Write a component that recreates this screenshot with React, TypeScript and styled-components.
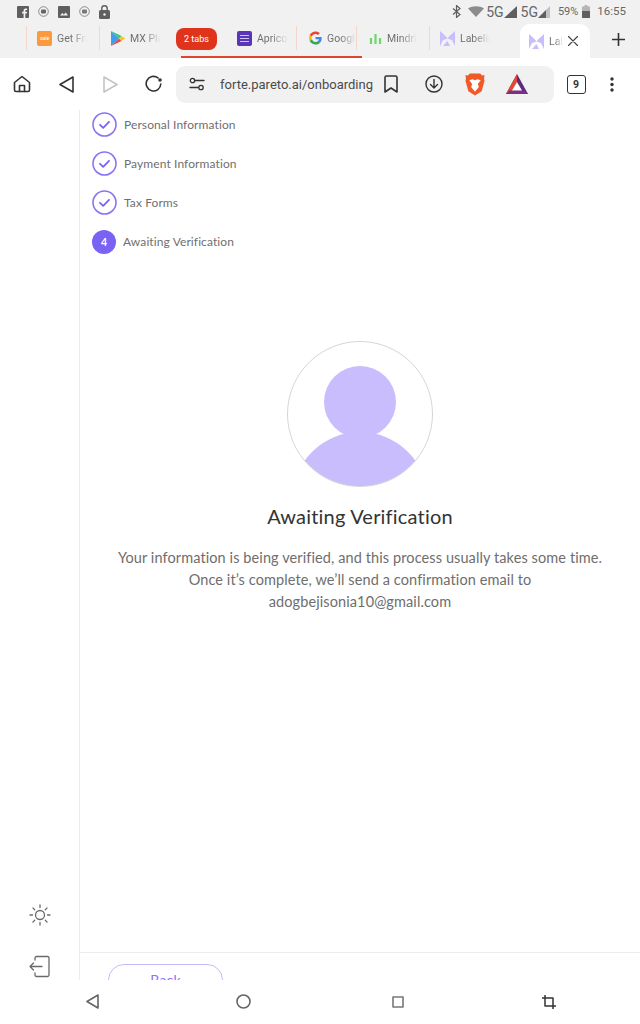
import React from "react";
import styled, { createGlobalStyle } from "styled-components";

const Global = createGlobalStyle`
  html, body { margin: 0; padding: 0; background: #fff; }
  * { box-sizing: border-box; }
`;

const Screen = styled.div`
  width: 640px; height: 1024px; overflow: hidden;
  display: flex; flex-direction: column;
  font-family: Roboto, "Liberation Sans", sans-serif;
  background: #fff;
`;
const StatusBar = styled.div`
  height: 24px; flex: none; background: #f1f1f1;
  display: flex; align-items: center; justify-content: space-between;
  padding: 0 14px 1px 17px; color: #5f5f5f;
`;
const StatusGroup = styled.div`
  display: flex; align-items: center; gap: ${p => p.$gap ?? 4}px;
`;
const StatusText = styled.span`
  font-size: ${p => p.$size ?? 11}px; color: #666; line-height: 1;
`;
const TabStrip = styled.div`
  height: 34px; flex: none; background: #f1f1f1;
  display: flex; align-items: flex-start; padding-left: 26px; position: relative;
`;
const Tab = styled.div`
  width: ${p => p.$w}px; flex: none; height: 24px; margin-top: 2px;
  display: flex; align-items: center; gap: 5px; padding-left: ${p => p.$pad ?? 10}px;
  border-left: 1px solid ${p => (p.$sep ? "#f6d5cd" : "transparent")};
  overflow: hidden;
`;
const TabLabel = styled.span`
  font-size: 10.5px; color: #707070; white-space: nowrap; overflow: hidden; width: ${p => p.$w}px;
  -webkit-mask-image: linear-gradient(90deg, #000 45%, transparent);
  mask-image: linear-gradient(90deg, #000 45%, transparent);
`;
const Group = styled.div`
  width: 60px; flex: none; height: 34px; margin-left: 5px; padding-left: 0;
  border-bottom: 0;
`;
const GroupPill = styled.div`
  width: 41px; height: 22px; margin-top: 4px; background: #e0331b; border-radius: 8px;
  color: #fff; font-size: 9px; display: flex; align-items: center; justify-content: center;
`;
const GroupLine = styled.div`
  position: absolute; left: 181px; top: 32px; width: 181px; height: 2px; background: #e0442f;
`;
const ActiveTab = styled.div`
  position: absolute; left: 520px; top: 0; width: 70px; height: 34px; background: #fff;
  border-radius: 10px 10px 0 0;
  display: flex; align-items: center; padding: 0 9px; gap: 5px;
`;
const PlusBtn = styled.div`
  position: absolute; left: 610px; top: 7px; width: 16px; height: 16px;
  color: #333; display: flex; align-items: center; justify-content: center;
`;
const Toolbar = styled.div`
  height: 52px; flex: none; background: #fff; display: flex; align-items: center;
  padding-left: 12px; position: relative;
`;
const ToolBtn = styled.div`
  width: ${p => p.$w ?? 20}px; height: 20px; flex: none; margin-right: ${p => p.$mr ?? 0}px;
  display: flex; align-items: center; justify-content: center;
`;
const UrlBar = styled.div`
  width: 378px; height: 37px; flex: none; background: #f1f1f1; border-radius: 9px;
  display: flex; align-items: center; margin: 0 12px 0 0; padding-left: 13px;
`;
const UrlText = styled.span`
  font-size: 13px; color: #4a4a4a; margin-left: 15px; width: 162px; white-space: nowrap;
`;
const TabCount = styled.div`
  width: 19px; height: 19px; border: 1.4px solid #333; border-radius: 3px;
  font-size: 10.5px; font-weight: 700; color: #333;
  display: flex; align-items: center; justify-content: center;
`;
const Body = styled.div`
  flex: 1; min-height: 0; display: flex; background: #fff;
`;
const Sidebar = styled.aside`
  width: 80px; flex: none; border-right: 1px solid #ececec;
  display: flex; flex-direction: column; align-items: center; justify-content: flex-end;
  padding-bottom: 2px; gap: 29px;
`;
const Main = styled.main`
  flex: 1; min-width: 0; display: flex; flex-direction: column;
  font-family: Lato, "Liberation Sans", sans-serif;
`;
const Content = styled.div`
  flex: 1; min-height: 0;
`;
const Steps = styled.ol`
  list-style: none; margin: 0; padding: 2px 0 0 12px;
  display: flex; flex-direction: column; gap: 14px;
`;
const Step = styled.li`
  display: flex; align-items: center; gap: 7px; height: 25px;
  font-size: 12px; color: #6f6f6f; letter-spacing: 0.1px;
`;
const StepNum = styled.span`
  width: 24px; height: 24px; border-radius: 50%; background: #7a62f5; color: #fff;
  font-size: 10.5px; font-weight: 700; display: flex; align-items: center; justify-content: center;
`;
const Center = styled.section`
  display: flex; flex-direction: column; align-items: center; margin-top: 87px;
`;
const Title = styled.h1`
  margin: 15px 0 0; font-size: 20px; line-height: 28px; font-weight: 400; color: #333; letter-spacing: 0.2px;
`;
const Para = styled.p`
  margin: 17px 0 0; font-size: 14.5px; line-height: 22px; text-align: center; color: #6e6e6e; letter-spacing: 0.1px;
`;
const Footer = styled.div`
  height: 28px; flex: none; border-top: 1px solid #ececec; padding: 11px 0 0 28px; overflow: hidden;
`;
const BackBtn = styled.div`
  width: 115px; height: 40px; border: 1px solid #c5bbfb; border-radius: 16px;
  color: #8b75f7; font-size: 14px; text-align: center; padding-top: 6px; letter-spacing: 0.2px;
`;
const NavBar = styled.div`
  height: 44px; flex: none; background: #fff; position: relative;
  display: grid; grid-template-columns: 92px 152px 153px 152px; padding-bottom: 1px;
`;
const NavItem = styled.div`
  display: flex; align-items: center; justify-content: flex-end; transform: translateX(7px);
`;

const Check = () => (
  <svg width="25" height="25" viewBox="0 0 25 25" fill="none">
    <circle cx="12.5" cy="12.5" r="11.5" stroke="#8a73f6" strokeWidth="1.6" />
    <path d="M8 12.8l3.2 3 5.8-6" stroke="#7a62f5" strokeWidth="1.8" strokeLinecap="round" strokeLinejoin="round" />
  </svg>
);
const LabelLogo = ({ s = 15 }: { s?: number }) => (
  <svg width={s} height={s} viewBox="0 0 15 15" fill="#c9bdfd">
    <path d="M0 0l5.5 5L7.5 7.5 3 9 0 15zM15 0L9.5 5 7.5 7.5 12 9 15 15zM3 15l4.5-5L10 15z" />
  </svg>
);
const Favicon = styled.span`
  width: 15px; height: 15px; flex: none; border-radius: ${p => p.$r ?? 2}px; background: ${p => p.$bg};
  color: #fff; font-size: 5px; display: flex; align-items: center; justify-content: center;
`;

const StatusIcons = () => (
  <StatusGroup $gap={9}>
    <svg width="12" height="12" viewBox="0 0 12 12"><rect width="12" height="12" rx="1" fill="#5f5f5f" /><path d="M8.3 12V7.5h1.5l.2-1.7H8.3V4.9c0-.5.2-.8.8-.8h1V2.6H8.7C7.400 2.600 6.600 3.400 6.600 4.700v1.100H5.100v1.700h1.500V12z" fill="#f1f1f1" /></svg>
    <svg width="11" height="11" viewBox="0 0 11 11"><circle cx="5.500" cy="5.500" r="4.800" fill="none" stroke="#8a8a8a" strokeWidth="1" /><rect x="3" y="3.500" width="5" height="4" rx="1" fill="#666" /></svg>
    <svg width="12" height="12" viewBox="0 0 12 12"><rect width="12" height="12" rx="1" fill="#5f5f5f" /><path d="M2 9.500l2.300-2.500 1.500 1.500L7.800 6.500 10 9.500z" fill="#f1f1f1" /></svg>
    <svg width="11" height="11" viewBox="0 0 11 11"><circle cx="5.500" cy="5.500" r="4.800" fill="none" stroke="#8a8a8a" strokeWidth="1" /><rect x="3" y="3.500" width="5" height="4" rx="1" fill="#777" /></svg>
    <svg width="12" height="14" viewBox="0 0 12 14"><rect y="5" width="11" height="9" rx="1.500" fill="#5f5f5f" /><path d="M2.800 5.500V3.500a2.700 2.700 0 015.400 0v2" fill="none" stroke="#5f5f5f" strokeWidth="1.400" /><circle cx="5.500" cy="9.500" r="1.200" fill="#f1f1f1" /></svg>
  </StatusGroup>
);

const StatusRight = () => (
  <StatusGroup $gap={0}>
    <svg width="10" height="13" viewBox="0 0 10 13" style={{ marginRight: 6 }}><path d="M1 3.500l7 6-3.500 3V.5l3.500 3-7 6" fill="none" stroke="#5f5f5f" strokeWidth="1.200" /></svg>
    <svg width="16" height="11" viewBox="0 0 16 11" style={{ marginRight: 2 }}><path d="M0 2.500C4 -.5 12 -.5 16 2.500L8 11z" fill="#8c8c8c" /></svg>
    <StatusText $size={14}>5G</StatusText>
    <svg width="13" height="12" viewBox="0 0 13 12" style={{ marginRight: 4 }}><path d="M13 0v12H0z" fill="#5f5f5f" /></svg>
    <StatusText $size={14}>5G</StatusText>
    <svg width="12" height="12" viewBox="0 0 12 12" style={{ marginRight: 8 }}><path d="M12 0v12H0z" fill="#c2c2c2" /><path d="M8 4v8H0z" fill="#5f5f5f" /></svg>
    <StatusText $size={11}>59%</StatusText>
    <svg width="8" height="13" viewBox="0 0 8 13" style={{ margin: "0 7px 0 4px" }}><path d="M2.500 0h3v1.500H8V13H0V1.500h2.500z" fill="#b5b5b5" /><path d="M0 6h8v7H0z" fill="#5f5f5f" /></svg>
    <StatusText $size={11.500}>16:55</StatusText>
  </StatusGroup>
);

const Icon = styled.svg`
  fill: none; stroke: ${p => p.$c ?? "#333"}; stroke-width: ${p => p.$sw ?? 1.600}; stroke-linejoin: round; stroke-linecap: round;
`;

export default function App() {
  return (
    <Screen>
      <Global />
      <StatusBar>
        <StatusIcons />
        <StatusRight />
      </StatusBar>
      <TabStrip>
        <Tab $w={73} $sep $pad={10}>
          <Favicon $bg="#fb9a3c">sale</Favicon>
          <TabLabel $w={30}>Get Free</TabLabel>
        </Tab>
        <Tab $w={72} $sep $pad={11}>
          <svg width="14" height="15" viewBox="0 0 14 15"><path d="M0 0l8 7.500L0 15z" fill="#3d9df0" /><path d="M0 0l10.500 5L8 7.500z" fill="#37c878" /><path d="M0 15l10.500-5L8 7.500z" fill="#ea4a3c" /><path d="M10.500 5L14 7.500 10.500 10 8 7.500z" fill="#fcc419" /></svg>
          <TabLabel $w={31}>MX Player</TabLabel>
        </Tab>
        <Group>
          <GroupPill>2 tabs</GroupPill>
        </Group>
        <Tab $w={60} $pad={0}>
          <Favicon $bg="#5a35b8"><svg width="9" height="7" viewBox="0 0 9 7"><path d="M0 .5h9M0 3.500h9M0 6.500h9" stroke="#cfc4f2" strokeWidth="1" /></svg></Favicon>
          <TabLabel $w={31}>Apricot</TabLabel>
        </Tab>
        <Tab $w={60} $sep $pad={12}>
          <svg width="14" height="14" viewBox="0 0 48 48"><path fill="#EA4335" d="M24 9.500c3.500 0 6.700 1.300 9.200 3.400l6.900-6.900C35.900 2.400 30.300 0 24 0 14.600 0 6.500 5.400 2.600 13.200l8 6.200C12.500 13.600 17.800 9.500 24 9.500z" /><path fill="#4285F4" d="M46.500 24.500c0-1.600-.1-3.100-.4-4.500H24v9h12.700c-.5 3-2.200 5.500-4.700 7.200l7.700 6c4.500-4.200 6.800-10.400 6.800-17.700z" /><path fill="#FBBC05" d="M10.500 28.600C10 27.200 9.800 25.600 9.800 24s.3-3.200.8-4.600l-8-6.200C1 16.400 0 20.100 0 24s1 7.600 2.600 10.800z" /><path fill="#34A853" d="M24 48c6.500 0 11.900-2.100 15.900-5.800l-7.700-6c-2.200 1.400-4.900 2.300-8.200 2.300-6.200 0-11.500-4.200-13.400-9.800l-8 6.200C6.500 42.600 14.600 48 24 48z" /></svg>
          <TabLabel $w={31}>Google</TabLabel>
        </Tab>
        <Tab $w={73} $sep $pad={12}>
          <svg width="13" height="13" viewBox="0 0 13 13" fill="none" stroke="#6fd66f" strokeWidth="2.200"><path d="M2 12V6M6.500 12V2M11 12V6" /></svg>
          <TabLabel $w={30}>Mindrift</TabLabel>
        </Tab>
        <Tab $w={70} $sep $pad={10}>
          <LabelLogo />
          <TabLabel $w={30}>Labeling</TabLabel>
        </Tab>
        <GroupLine />
        <ActiveTab>
          <LabelLogo />
          <TabLabel $w={14}>Label</TabLabel>
          <Icon width="10" height="10" viewBox="0 0 10 10" $sw={1.200} $c="#444"><path d="M.5.500l9 9M9.500.500l-9 9" /></Icon>
        </ActiveTab>
        <PlusBtn>
          <Icon width="13" height="13" viewBox="0 0 13 13" $sw={1.600}><path d="M6.500 0v13M0 6.500h13" /></Icon>
        </PlusBtn>
      </TabStrip>
      <Toolbar>
        <ToolBtn $w={20} $mr={24}>
          <Icon width="18" height="18" viewBox="0 0 18 18"><path d="M1.500 7.500L9 1.500l7.500 6V15a1.500 1.500 0 01-1.500 1.500H3A1.500 1.500 0 011.500 15z" /><path d="M6.500 16.500V10.500h5v6" /></Icon>
        </ToolBtn>
        <ToolBtn $w={20} $mr={24}>
          <Icon width="15" height="17" viewBox="0 0 15 17"><path d="M14 1L1 8.500 14 16z" /></Icon>
        </ToolBtn>
        <ToolBtn $w={20} $mr={24}>
          <Icon width="15" height="17" viewBox="0 0 15 17" $c="#c4c4c4"><path d="M1 1l13 7.500L1 16z" /></Icon>
        </ToolBtn>
        <ToolBtn $w={20} $mr={12}>
          <Icon width="18" height="18" viewBox="0 0 18 18"><path d="M15.800 9A7.300 7.300 0 1113 2.900" /><circle cx="15" cy="5" r="1" fill="#333" /></Icon>
        </ToolBtn>
        <UrlBar>
          <Icon width="16" height="15" viewBox="0 0 16 15" $sw={1.300}><circle cx="3.500" cy="3.500" r="2.200" /><path d="M6 3.500h9M1 10.500h8" /><circle cx="12" cy="10.500" r="2.200" /></Icon>
          <UrlText>forte.pareto.ai/onboarding</UrlText>
          <ToolBtn $w={18} $mr={25}>
            <Icon width="14" height="18" viewBox="0 0 14 18"><path d="M1 2.500A1.500 1.500 0 012.500 1h9A1.500 1.500 0 0113 2.500V17l-6-4-6 4z" /></Icon>
          </ToolBtn>
          <ToolBtn $w={18} $mr={22}>
            <Icon width="18" height="18" viewBox="0 0 18 18" $sw={1.400}><circle cx="9" cy="9" r="8" /><path d="M9 4.500v8.500M5.500 9.500L9 13l3.500-3.500" /></Icon>
          </ToolBtn>
          <ToolBtn $w={20} $mr={21}>
            <svg width="21" height="23" viewBox="0 0 21 23"><path d="M5 0h11l2 2 2.500-.5-.5 4 .5 2-3 11L10.500 23 3.500 18.500l-3-11 .5-2-.5-4L3 2z" fill="#f15a27" /><path d="M4.500 7l3.500-1 2.500 1 2.500-1 3.500 1-3 4 1 3-4 5-4-5 1-3z" fill="#fff" /></svg>
          </ToolBtn>
          <ToolBtn $w={22}>
            <svg width="22" height="20" viewBox="0 0 22 20"><path d="M11 0l11 20H0z" fill="#5d2c7f" /><path d="M11 0L0 20h5L11 9z" fill="#e14a32" /><path d="M0 20h22l-3.500-3.500h-15z" fill="#7b2f86" /><path d="M11 8l5 8.500H6z" fill="#fff" /></svg>
          </ToolBtn>
        </UrlBar>
        <ToolBtn $w={20} $mr={24}><TabCount>9</TabCount></ToolBtn>
        <ToolBtn $w={4}>
          <svg width="4" height="15" viewBox="0 0 4 15" fill="#333"><circle cx="2" cy="2" r="1.700" /><circle cx="2" cy="7.500" r="1.700" /><circle cx="2" cy="13" r="1.700" /></svg>
        </ToolBtn>
      </Toolbar>
      <Body>
        <Sidebar>
          <Icon width="22" height="22" viewBox="0 0 22 22" $c="#6a6a6a" $sw={1.300}>
            <circle cx="11" cy="11" r="4.500" />
            <path d="M11 1v2.500M11 18.500V21M1 11h2.500M18.500 11H21M3.900 3.900l1.800 1.800M16.300 16.300l1.800 1.800M3.900 18.100l1.800-1.800M16.300 5.700l1.800-1.800" />
          </Icon>
          <Icon width="22" height="23" viewBox="0 0 22 23" $c="#6a6a6a" $sw={1.300}>
            <path d="M6 5V3a1.500 1.500 0 011.500-1.500h11A1.500 1.500 0 0120 3v17a1.500 1.500 0 01-1.500 1.500h-11A1.500 1.500 0 016 20v-2" />
            <path d="M13 11.500H1M4.500 8L1 11.500 4.500 15" />
          </Icon>
        </Sidebar>
        <Main>
          <Content>
            <Steps>
              <Step><Check />Personal Information</Step>
              <Step><Check />Payment Information</Step>
              <Step><Check />Tax Forms</Step>
              <Step><StepNum>4</StepNum>Awaiting Verification</Step>
            </Steps>
            <Center>
              <svg width="146" height="146" viewBox="0 0 146 146">
                <defs><clipPath id="avatarClip"><circle cx="73" cy="73" r="72.500" /></clipPath></defs>
                <circle cx="73" cy="61" r="36" fill="#c9bdfd" />
                <circle cx="73" cy="159" r="68" fill="#c9bdfd" clipPath="url(#avatarClip)" />
                <circle cx="73" cy="73" r="72.500" fill="none" stroke="#d6d6d6" strokeWidth="1" />
              </svg>
              <Title>Awaiting Verification</Title>
              <Para>
                Your information is being verified, and this process usually takes some time.<br />
                Once it’s complete, we’ll send a confirmation email to<br />
                adogbejisonia10@gmail.com
              </Para>
            </Center>
          </Content>
          <Footer>
            <BackBtn>Back</BackBtn>
          </Footer>
        </Main>
      </Body>
      <NavBar>
        <NavItem>
          <Icon width="13" height="15" viewBox="0 0 13 15" $c="#666"><path d="M12 1L1 7.500 12 14z" /></Icon>
        </NavItem>
        <NavItem>
          <Icon width="15" height="15" viewBox="0 0 15 15" $c="#666"><circle cx="7.500" cy="7.500" r="6.500" /></Icon>
        </NavItem>
        <NavItem>
          <Icon width="12" height="12" viewBox="0 0 12 12" $c="#777"><rect x="1" y="1" width="10" height="10" /></Icon>
        </NavItem>
        <NavItem>
          <Icon width="14" height="14" viewBox="0 0 14 14" $c="#333" $sw={1.500}><path d="M3 0v11h11M0 3h11v11" /></Icon>
        </NavItem>
      </NavBar>
    </Screen>
  );
}
